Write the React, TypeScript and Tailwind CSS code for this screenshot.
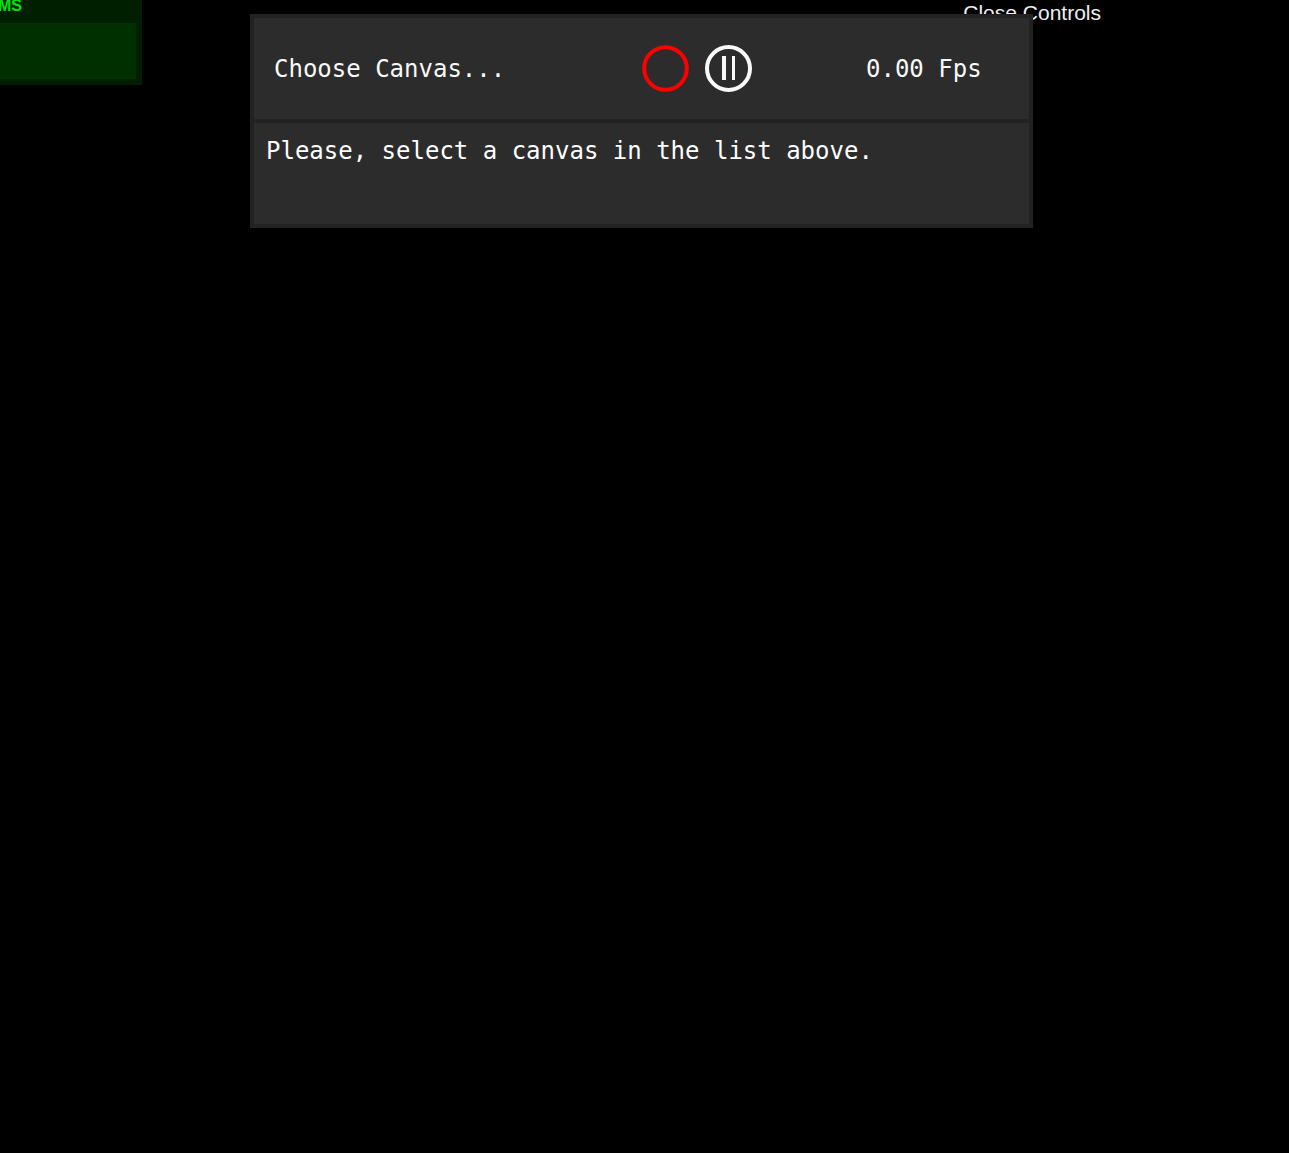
import { useState } from "react";

function StatsPanel() {
  return (
    <aside className="h-[85px] w-[142px] shrink-0 overflow-hidden bg-[#001f00] pr-1.5 font-['Liberation_Sans',sans-serif]">
      <div className="-ml-0.5 -mt-0.5 h-[25px] text-base leading-4 font-bold text-[#00e600]">MS</div>
      <div className="h-14 bg-[#003000]" />
    </aside>
  );
}

function RecordIcon() {
  return (
    <svg className="size-[47px]" viewBox="0 0 47 47" fill="none" aria-hidden="true">
      <circle cx="23.5" cy="23.5" r="21.3" stroke="#ff0000" strokeWidth="4" />
    </svg>
  );
}

function PauseIcon() {
  return (
    <svg className="size-[47px]" viewBox="0 0 47 47" fill="none" aria-hidden="true">
      <circle cx="23.5" cy="23.5" r="21.5" stroke="#f9f9f9" strokeWidth="4" />
      <path d="M17 11h4v24h-4zM27 11h3v24h-3z" fill="#f9f9f9" />
    </svg>
  );
}

function CapturePanel() {
  const [recording, setRecording] = useState(false);
  const [paused, setPaused] = useState(false);

  return (
    <section className="relative mt-3.5 flex min-w-0 flex-1 flex-col gap-1 bg-[#222222] p-1 font-['DejaVu_Sans_Mono',monospace] text-2xl leading-8 text-white">
      <div className="flex h-[101px] items-center justify-between bg-[#2c2c2c] pr-12 pl-5 text-[#f9f9f9]">
        <select
          aria-label="Canvas"
          className="w-[254px] appearance-none bg-transparent outline-none"
          defaultValue=""
        >
          <option value="">Choose Canvas...</option>
        </select>
        <div className="flex gap-4">
          <button
            type="button"
            aria-label="Record"
            aria-pressed={recording}
            onClick={() => setRecording(!recording)}
          >
            <RecordIcon />
          </button>
          <button
            type="button"
            aria-label="Pause"
            aria-pressed={paused}
            onClick={() => setPaused(!paused)}
          >
            <PauseIcon />
          </button>
        </div>
        <output className="w-[115px] whitespace-nowrap">0.00 Fps</output>
      </div>
      <p className="h-[101px] bg-[#2c2c2c] px-3 pt-3">Please, select a canvas in the list above.</p>
    </section>
  );
}

export default function App() {
  return (
    <main className="relative min-h-screen bg-black">
      <button
        type="button"
        className="absolute top-0 right-[188px] font-['Liberation_Sans',sans-serif] text-[21px] leading-[25px] text-[#eeeeee]"
      >
        Close Controls
      </button>
      <div className="flex items-start gap-[108px] pr-64">
        <StatsPanel />
        <CapturePanel />
      </div>
    </main>
  );
}
